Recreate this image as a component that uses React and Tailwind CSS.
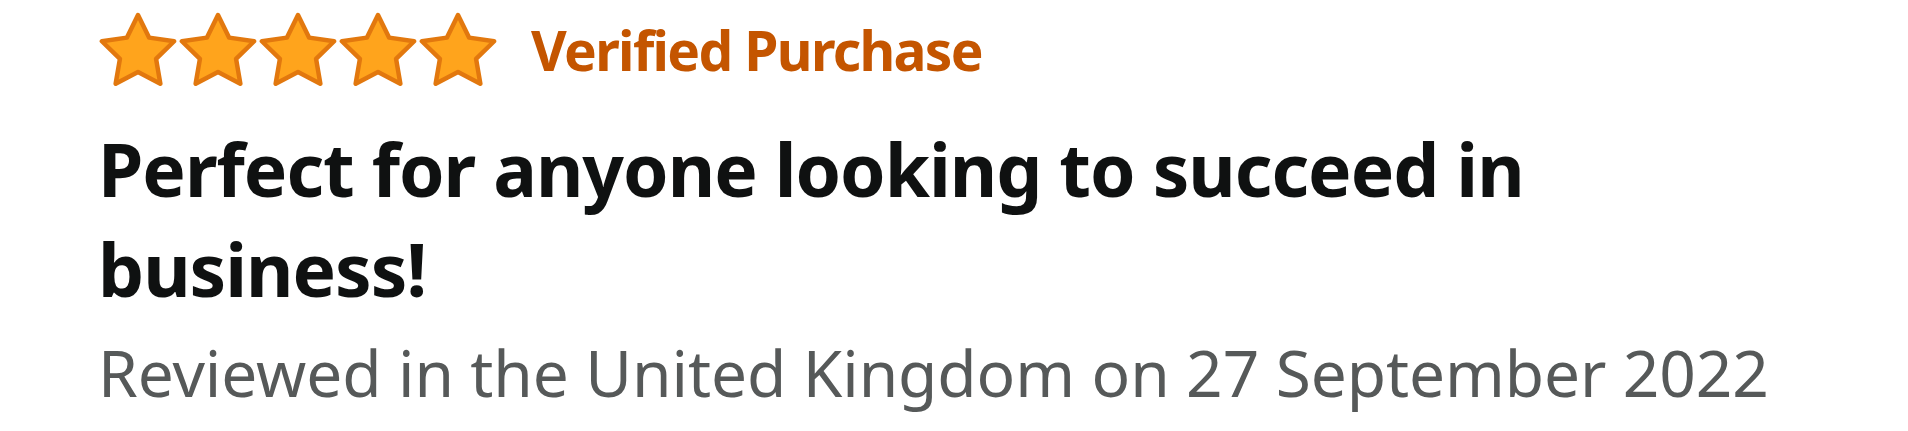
import React from "react";

function Star() {
  const cx = 40;
  const cy = 41;
  const R = 38;
  const r = 19;
  const pts = [];
  for (let i = 0; i < 10; i++) {
    const ang = ((-90 + i * 36) * Math.PI) / 180;
    const rad = i % 2 === 0 ? R : r;
    pts.push(`${(cx + rad * Math.cos(ang)).toFixed(2)},${(cy + rad * Math.sin(ang)).toFixed(2)}`);
  }
  return (
    <svg width="80" height="74" viewBox="0 0 80 74" className="block">
      <polygon
        points={pts.join(" ")}
        fill="#FFA41C"
        stroke="#E2780E"
        strokeWidth="4.5"
        strokeLinejoin="round"
      />
    </svg>
  );
}

export default function App() {
  const font = { fontFamily: '"Noto Sans", "Open Sans", sans-serif' };
  return (
    <div className="w-[1908px] h-[431px] bg-white overflow-hidden pl-[98px] pr-[98px]" style={font}>
      <div className="flex items-center h-[74px] mt-[12px]">
        <div className="flex">
          <Star />
          <Star />
          <Star />
          <Star />
          <Star />
        </div>
        <span className="ml-[33px] text-[55px] leading-[55px] font-bold text-[#C45500] tracking-[-1.65px]">
          Verified Purchase
        </span>
      </div>
      <div className="mt-[33px] text-[73px] leading-[100px] font-bold text-[#0F1111] tracking-[-1px]">
        Perfect for anyone looking to succeed in business!
      </div>
      <div className="mt-[10px] text-[64px] leading-[88px] text-[#565959] tracking-[-0.1px]">
        Reviewed in the United Kingdom on 27 September 2022
      </div>
    </div>
  );
}
